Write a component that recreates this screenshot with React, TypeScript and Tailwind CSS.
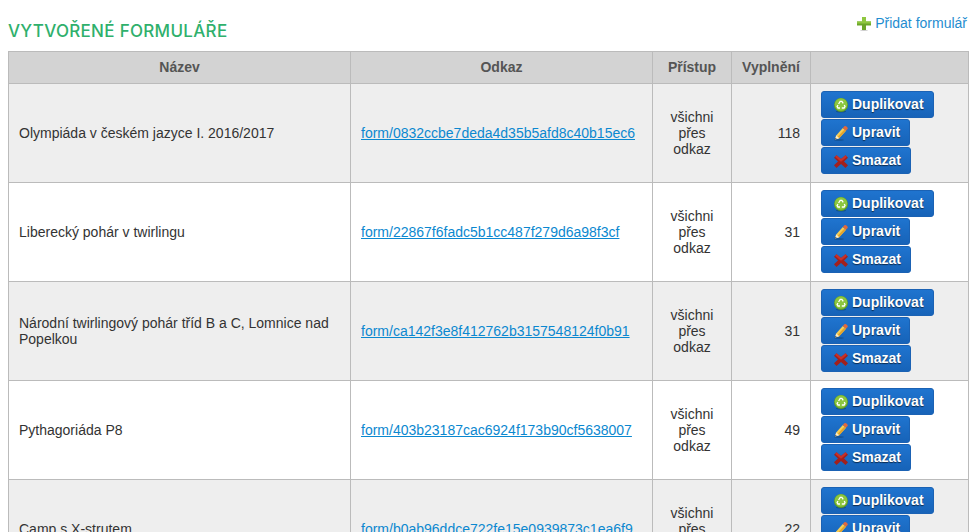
import { ReactNode } from 'react';

interface Row {
  name: string;
  link: string;
  count: number;
}

const ROWS: Row[] = [
  { name: 'Olympiáda v českém jazyce I. 2016/2017', link: 'form/0832ccbe7deda4d35b5afd8c40b15ec6', count: 118 },
  { name: 'Liberecký pohár v twirlingu', link: 'form/22867f6fadc5b1cc487f279d6a98f3cf', count: 31 },
  { name: 'Národní twirlingový pohár tříd B a C, Lomnice nad Popelkou', link: 'form/ca142f3e8f412762b3157548124f0b91', count: 31 },
  { name: 'Pythagoriáda P8', link: 'form/403b23187cac6924f173b90cf5638007', count: 49 },
  { name: 'Camp s X-strutem', link: 'form/b0ab96ddce722fe15e0939873c1ea6f9', count: 22 },
];

function RecycleIcon() {
  return (
    <svg width="16" height="16" viewBox="0 0 16 16" className="shrink-0">
      <ellipse cx="8" cy="14.500" rx="5" ry="1" fill="#14508f" />
      <circle cx="8" cy="8" r="7" fill="#5e9c22" />
      <circle cx="8" cy="7.500" r="6.300" fill="#8cc63f" />
      <path d="M5.600 7 7.200 4.300h1.700L10.200 6.300" fill="none" stroke="#fff" strokeWidth="1.300" />
      <path d="M11.200 8l.8 1.500-.9 1.500H8.800" fill="none" stroke="#fff" strokeWidth="1.300" />
      <path d="M7 11H5l-.9-1.500L5 8" fill="none" stroke="#fff" strokeWidth="1.300" />
    </svg>
  );
}

function PencilIcon() {
  return (
    <svg width="16" height="16" viewBox="0 0 16 16" className="shrink-0">
      <ellipse cx="6" cy="15" rx="5" ry="0.800" fill="#14508f" />
      <path d="M2 14.500 3.200 10.400 9.800 3 13 5.800 6.200 13.200Z" fill="#f6cf57" />
      <path d="M4.700 11.800 11.500 4.500 13 5.800 6.200 13.200Z" fill="#e3a32c" />
      <path d="M9.800 3 11.200 1.400C12 .8 12.800 .9 13.500 1.500L14.200 2.200C14.900 3 14.900 3.700 14.400 4.300L13 5.800Z" fill="#e2693c" />
      <path d="M2 14.500 3.200 10.400 6.200 13.200Z" fill="#fbeccb" />
      <path d="M2 14.500 2.500 12.800 3.800 14Z" fill="#3b3b3b" />
    </svg>
  );
}

function CrossIcon() {
  return (
    <svg width="16" height="16" viewBox="0 0 16 16" className="shrink-0">
      <path d="M3.500 2.200 8 6 12.500 2.200 15 4.800 11 8.400 15 12.300 12.500 15 8 11 3.500 15 1 12.300 5 8.400 1 4.800Z" fill="#a3201c" />
      <path d="M3.500 2.200 8 6 12.500 2.200 14 3.800 8 8.700 2 3.800Z" fill="#c8322a" />
    </svg>
  );
}

function PlusIcon() {
  return (
    <svg width="14" height="14" viewBox="0 0 14 14" className="shrink-0">
      <path d="M5 0h4v4.500h5v4H9V13H5V8.500H0v-4h5Z" fill="#6ca52a" />
      <path d="M5 0h4v4.500h5v2H0v-2h5Z" fill="#8fc740" />
      <ellipse cx="7" cy="13.500" rx="4" ry="0.500" fill="#ccc" />
    </svg>
  );
}

function ActionButton({ icon, label }: { icon: ReactNode; label: string }) {
  return (
    <a className="flex h-[27px] w-fit items-center gap-[3px] rounded-[3px] border border-[#1b62b4] bg-gradient-to-b from-[#1f74cf] to-[#1763b8] pl-[11px] pr-[9px] text-[14px] font-bold text-white [text-shadow:0_1px_1px_rgba(0,0,0,0.6)]">
      {icon}
      <span>{label}</span>
    </a>
  );
}

export default function App() {
  return (
    <div className="h-[532px] overflow-hidden bg-white font-['Liberation_Sans',Arial,sans-serif] text-[14px] text-[#333]">
      <div className="flex items-start justify-between pl-2 pr-[11px]">
        <h2 className="mt-[20px] font-['Inter',sans-serif] text-[17px] leading-[22px] font-medium tracking-[0.3px] text-[#2fb06c]">
          VYTVOŘENÉ FORMULÁŘE
        </h2>
        <a className="mt-[13px] flex items-center gap-[4px] text-[#1f8dd0]">
          <PlusIcon />
          <span>Přidat formulář</span>
        </a>
      </div>

      <table className="mt-[9px] ml-2 w-[961px] table-fixed border-collapse">
        <colgroup>
          <col className="w-[342px]" />
          <col className="w-[302px]" />
          <col className="w-[79px]" />
          <col className="w-[79px]" />
          <col />
        </colgroup>
        <thead>
          <tr className="h-[32px] bg-[#d3d3d3] text-[#555]">
            <th className="border border-[#bbb] font-bold">Název</th>
            <th className="border border-[#bbb] font-bold">Odkaz</th>
            <th className="border border-[#bbb] font-bold">Přístup</th>
            <th className="border border-[#bbb] font-bold">Vyplnění</th>
            <th className="border border-[#bbb]" />
          </tr>
        </thead>
        <tbody>
          {ROWS.map((row, i) => (
            <tr key={row.link} className={i % 2 === 0 ? 'bg-[#eee]' : 'bg-white'}>
              <td className="border border-[#bbb] px-[10px] leading-4">{row.name}</td>
              <td className="border border-[#bbb] px-[10px]">
                <a className="whitespace-nowrap text-[#0b88d0] underline">{row.link}</a>
              </td>
              <td className="border border-[#bbb] px-[10px] text-center leading-4">
                všichni
                <br />
                přes
                <br />
                odkaz
              </td>
              <td className="border border-[#bbb] px-[10px] text-right">{row.count}</td>
              <td className="border border-[#bbb] px-[10px] pt-[7px] pb-[8px]">
                <div className="flex flex-col gap-[1px]">
                  <ActionButton icon={<RecycleIcon />} label="Duplikovat" />
                  <ActionButton icon={<PencilIcon />} label="Upravit" />
                  <ActionButton icon={<CrossIcon />} label="Smazat" />
                </div>
              </td>
            </tr>
          ))}
        </tbody>
      </table>
    </div>
  );
}
